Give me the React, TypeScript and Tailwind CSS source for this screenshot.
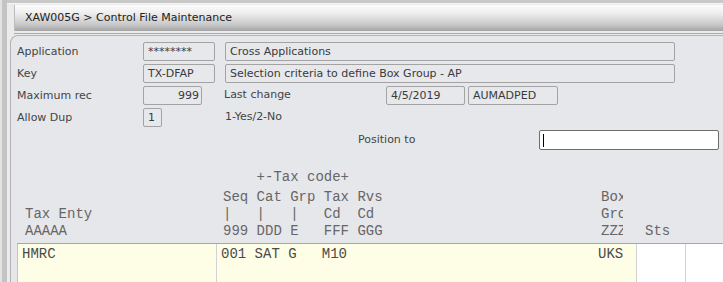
const sans = "font-['DejaVu_Sans',Verdana,sans-serif]";
const mono = "font-['Liberation_Mono','Courier_New',monospace]";

function Field({ w, children, right }: { w: string; children?: React.ReactNode; right?: boolean }) {
  return (
    <div
      className={`${w} h-[19px] border border-[#a3a3a3] rounded-[2px] bg-[#e7e8ec] text-[#3a3a3a] text-[11px] leading-[17px] px-[4px] whitespace-nowrap overflow-hidden ${
        right ? "text-right pr-[2px]" : ""
      }`}
    >
      {children}
    </div>
  );
}

function Label({ children }: { children: React.ReactNode }) {
  return <div className="w-[126px] text-[11px] text-[#444] leading-[19px]">{children}</div>;
}

export default function App() {
  return (
    <div className={`w-[723px] h-[282px] overflow-hidden bg-[#c9c9c9] flex ${sans}`}>
      <div className="w-[7px] shrink-0 border-l-2 border-[#e2e2e2] bg-[#c4c4c4]" />
      <div className="flex-1 flex flex-col mt-[3px] bg-[#ebebeb] border-t border-[#f4f4f4] min-w-0">
        {/* title bar */}
        <div className="ml-[7px] mt-[1px] h-[26px] flex items-center pl-[10px] border-l border-[#bdbdbd] bg-[linear-gradient(to_bottom,#fdfdfd_0%,#ececec_35%,#c8c8c8_75%,#a4a4a4_100%)] text-[11px] text-[#222]">
          XAW005G &gt; Control File Maintenance
        </div>
        <div className="h-[3px] border-b border-[#a9a9a9] ml-[7px]" />

        {/* panel */}
        <div className="flex-1 ml-[3px] mt-[1px] rounded-tl-[8px] border-l border-t border-[#b3b3b3] bg-[#e6e7eb] pl-[6px] pt-[6px] flex flex-col">
          <div className="flex flex-col gap-[3px]">
            <div className="flex items-center">
              <Label>Application</Label>
              <Field w="w-[72px]">********</Field>
              <div className="w-[10px]" />
              <Field w="w-[450px]">Cross Applications</Field>
            </div>
            <div className="flex items-center">
              <Label>Key</Label>
              <Field w="w-[72px]">TX-DFAP</Field>
              <div className="w-[10px]" />
              <Field w="w-[450px]">Selection criteria to define Box Group - AP</Field>
            </div>
            <div className="flex items-center">
              <Label>Maximum rec</Label>
              <Field w="w-[59px]" right>
                999
              </Field>
              <div className="w-[22px] shrink-0" />
              <div className="w-[162px] text-[11px] text-[#444]">Last change</div>
              <Field w="w-[79px]">4/5/2019</Field>
              <div className="w-[3px]" />
              <Field w="w-[90px]">AUMADPED</Field>
            </div>
            <div className="flex items-center">
              <Label>Allow Dup</Label>
              <Field w="w-[19px]">1</Field>
              <div className="w-[63px] shrink-0" />
              <div className="text-[11px] text-[#444]">1-Yes/2-No</div>
            </div>
            <div className="flex items-center h-[20px]">
              <div className="w-[341px] shrink-0" />
              <div className="w-[181px] shrink-0 text-[11px] text-[#444]">Position to</div>
              <div className="w-[180px] h-[20px] border border-[#6e6e6e] rounded-[2px] bg-white flex items-center pl-[3px]">
                <div className="w-px h-[13px] bg-black" />
              </div>
            </div>
          </div>

          {/* table header */}
          <div className={`mt-[19px] flex text-[14px] leading-[17px] text-[#666] ${mono}`}>
            <div className="w-[199px] shrink-0 pl-[8px] pt-[37px]">
              <div>Tax Enty</div>
              <div>AAAAA</div>
            </div>
            <div className="w-[420px] shrink-0 flex">
              <div className="w-[382px] shrink-0 pl-[7px] whitespace-pre">
                <div>{"    +-Tax code+"}</div>
                <div className="mt-[3px]">Seq Cat Grp Tax Rvs</div>
                <div>{"|   |   |   Cd  Cd"}</div>
                <div>999 DDD E   FFF GGG</div>
              </div>
              <div className="ml-[3px] w-[22px] overflow-hidden whitespace-pre pt-[20px]">
                <div>Box</div>
                <div>Gro</div>
                <div>ZZZ</div>
              </div>
            </div>
            <div className="pl-[9px] pt-[54px]">Sts</div>
          </div>

          {/* table row */}
          <div className={`mt-[3px] flex-1 flex border-t border-[#a8a8a8] text-[14px] leading-[17px] text-[#4a4a4a] ${mono}`}>
            <div className="w-[199px] shrink-0 bg-[#fefee6] border-l border-[#c4c4c4] pl-[4px] pt-[2px]">HMRC</div>
            <div className="w-[420px] shrink-0 bg-[#fefee6] border-l border-[#d2d2d2] flex pt-[2px]">
              <div className="w-[381px] shrink-0 pl-[4px] whitespace-pre">001 SAT G   M10</div>
              <div className="w-[25px] overflow-hidden">UKS</div>
            </div>
            <div className="w-[49px] shrink-0 bg-white border-l border-[#d2d2d2]" />
            <div className="flex-1 bg-white border-l border-[#d2d2d2]" />
          </div>
        </div>
      </div>
    </div>
  );
}
